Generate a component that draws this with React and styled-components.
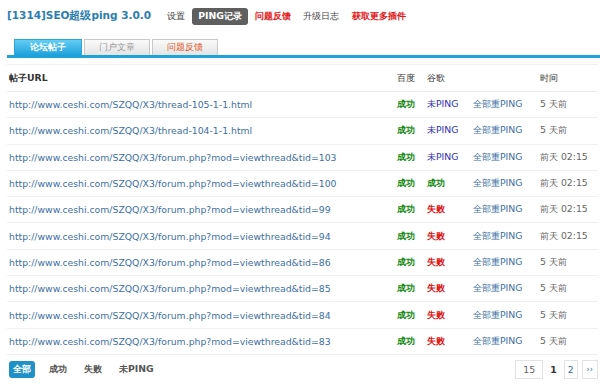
import React from "react";
import styled, { createGlobalStyle } from "styled-components";

const Global = createGlobalStyle`
  html, body { margin: 0; padding: 0; background: #fff; }
  body { font-family: "DejaVu Sans", Verdana, sans-serif; font-size: 9.3px; color: #333; }
`;

const Page = styled.div`
  width: 600px;
  height: 387px;
  overflow: hidden;
  padding: 0 0 0 7px;
  box-sizing: border-box;
`;

const TopBar = styled.div`
  display: flex;
  align-items: center;
  height: 32px;
`;

const Title = styled.div`
  font-weight: bold;
  font-size: 10.5px;
  color: #2d7db3;
  margin-right: 16px;
`;

const NavItem = styled.span`
  margin-right: ${(p) => p.$gap || 12}px;
  color: ${(p) => (p.$red ? "#e31b1b" : "#444")};
  font-weight: ${(p) => (p.$red ? "bold" : "normal")};
`;

const NavBadge = styled.span`
  background: #5f5f5f;
  color: #fff;
  font-weight: bold;
  padding: 2px 6px;
  border-radius: 3px;
  margin-right: 7px;
`;

const Tabs = styled.div`
  display: flex;
  align-items: flex-end;
  padding-left: 7px;
  margin-top: 6px;
  height: 17px;
  border-bottom: 3px solid #1ca2d9;
`;

const Tab = styled.div`
  width: ${(p) => (p.$active ? 68 : 66)}px;
  height: 16px;
  margin-right: 2px;
  display: flex;
  align-items: center;
  justify-content: center;
  box-sizing: border-box;
  border: 1px solid ${(p) => (p.$active ? "#2aa6dc" : "#c9c9c9")};
  border-bottom: none;
  background: ${(p) =>
    p.$active
      ? "linear-gradient(#63cdf3, #1ea2dc)"
      : "linear-gradient(#fafafa, #e4e4e4)"};
  color: ${(p) => (p.$active ? "#fff" : p.$color || "#999")};
  font-weight: ${(p) => (p.$active ? "bold" : "normal")};
`;

const Table = styled.table`
  width: 591px;
  border-collapse: collapse;
  margin-top: 6px;
  border-top: 1px solid #f0f0f0;
`;

const Th = styled.th`
  text-align: left;
  font-weight: ${(p) => (p.$bold ? "bold" : "normal")};
  color: #333;
  height: 26px;
  padding: 0 0 0 ${(p) => p.$pl || 0}px;
  width: ${(p) => (p.$w ? p.$w + "px" : "auto")};
  border-bottom: 1px solid #ececec;
`;

const Td = styled.td`
  height: 25.3px;
  padding: 0 0 0 ${(p) => p.$pl || 0}px;
  border-bottom: 1px solid #f0f0f0;
  white-space: nowrap;
  color: ${(p) => p.$color || "#333"};
  font-weight: ${(p) => (p.$bold ? "bold" : "normal")};
`;

const Url = styled.span`
  color: #3c6fa3;
`;

const Footer = styled.div`
  display: flex;
  align-items: center;
  justify-content: space-between;
  margin-top: 5px;
  padding-right: 2px;
`;

const Filters = styled.div`
  display: flex;
  align-items: center;
  gap: 17px;
  padding-left: 2px;
`;

const Filter = styled.span`
  font-weight: bold;
  color: ${(p) => (p.$active ? "#fff" : "#555")};
  background: ${(p) => (p.$active ? "#1f91c8" : "transparent")};
  padding: ${(p) => (p.$active ? "2px 4px" : "2px 0")};
  margin-right: ${(p) => (p.$active ? -3 : 0)}px;
  border-radius: 3px;
`;

const Pager = styled.div`
  display: flex;
  align-items: center;
  gap: 4px;
`;

const PageBox = styled.span`
  border: 1px solid #e3e3e3;
  color: ${(p) => (p.$current ? "#333" : p.$blue ? "#3c6fa3" : "#666")};
  font-weight: ${(p) => (p.$current ? "bold" : "normal")};
  border-color: ${(p) => (p.$current ? "transparent" : "#e3e3e3")};
  padding: 2px ${(p) => p.$px ?? 4}px;
  height: 13px;
  line-height: 13px;
  font-size: ${(p) => p.$fs || 9.3}px;
`;

const statusColor = { 成功: "#118a11", 失败: "#e01515", 未PING: "#3131b8" };

const rows = [
  ["http://www.ceshi.com/SZQQ/X3/thread-105-1-1.html", "未PING", "5 天前"],
  ["http://www.ceshi.com/SZQQ/X3/thread-104-1-1.html", "未PING", "5 天前"],
  ["http://www.ceshi.com/SZQQ/X3/forum.php?mod=viewthread&tid=103", "未PING", "前天 02:15"],
  ["http://www.ceshi.com/SZQQ/X3/forum.php?mod=viewthread&tid=100", "成功", "前天 02:15"],
  ["http://www.ceshi.com/SZQQ/X3/forum.php?mod=viewthread&tid=99", "失败", "前天 02:15"],
  ["http://www.ceshi.com/SZQQ/X3/forum.php?mod=viewthread&tid=94", "失败", "前天 02:15"],
  ["http://www.ceshi.com/SZQQ/X3/forum.php?mod=viewthread&tid=86", "失败", "5 天前"],
  ["http://www.ceshi.com/SZQQ/X3/forum.php?mod=viewthread&tid=85", "失败", "5 天前"],
  ["http://www.ceshi.com/SZQQ/X3/forum.php?mod=viewthread&tid=84", "失败", "5 天前"],
  ["http://www.ceshi.com/SZQQ/X3/forum.php?mod=viewthread&tid=83", "失败", "5 天前"],
];

export default function App() {
  return (
    <Page>
      <Global />
      <TopBar>
        <Title>[1314]SEO超级ping 3.0.0</Title>
        <NavItem $gap={7}>设置</NavItem>
        <NavBadge>PING记录</NavBadge>
        <NavItem $red>问题反馈</NavItem>
        <NavItem $gap={13}>升级日志</NavItem>
        <NavItem $red>获取更多插件</NavItem>
      </TopBar>
      <Tabs>
        <Tab $active>论坛帖子</Tab>
        <Tab>门户文章</Tab>
        <Tab $color="#e0541e">问题反馈</Tab>
      </Tabs>
      <Table>
        <thead>
          <tr>
            <Th $bold $pl={2}>帖子URL</Th>
            <Th $w={30}>百度</Th>
            <Th $w={46}>谷歌</Th>
            <Th $w={67}></Th>
            <Th $w={58}>时间</Th>
          </tr>
        </thead>
        <tbody>
          {rows.map(([url, g, t], i) => (
            <tr key={i}>
              <Td $pl={2}><Url>{url}</Url></Td>
              <Td $bold $color={statusColor["成功"]}>成功</Td>
              <Td $bold={g !== "未PING"} $color={statusColor[g]}>{g}</Td>
              <Td $color="#3c6fa3">全部重PING</Td>
              <Td $color="#666">{t}</Td>
            </tr>
          ))}
        </tbody>
      </Table>
      <Footer>
        <Filters>
          <Filter $active>全部</Filter>
          <Filter>成功</Filter>
          <Filter>失败</Filter>
          <Filter>未PING</Filter>
        </Filters>
        <Pager>
          <PageBox $px={7}>15</PageBox>
          <PageBox $current $px={2}>1</PageBox>
          <PageBox $blue $px={3}>2</PageBox>
          <PageBox $fs={8} $px={4} $blue>››</PageBox>
        </Pager>
      </Footer>
    </Page>
  );
}
